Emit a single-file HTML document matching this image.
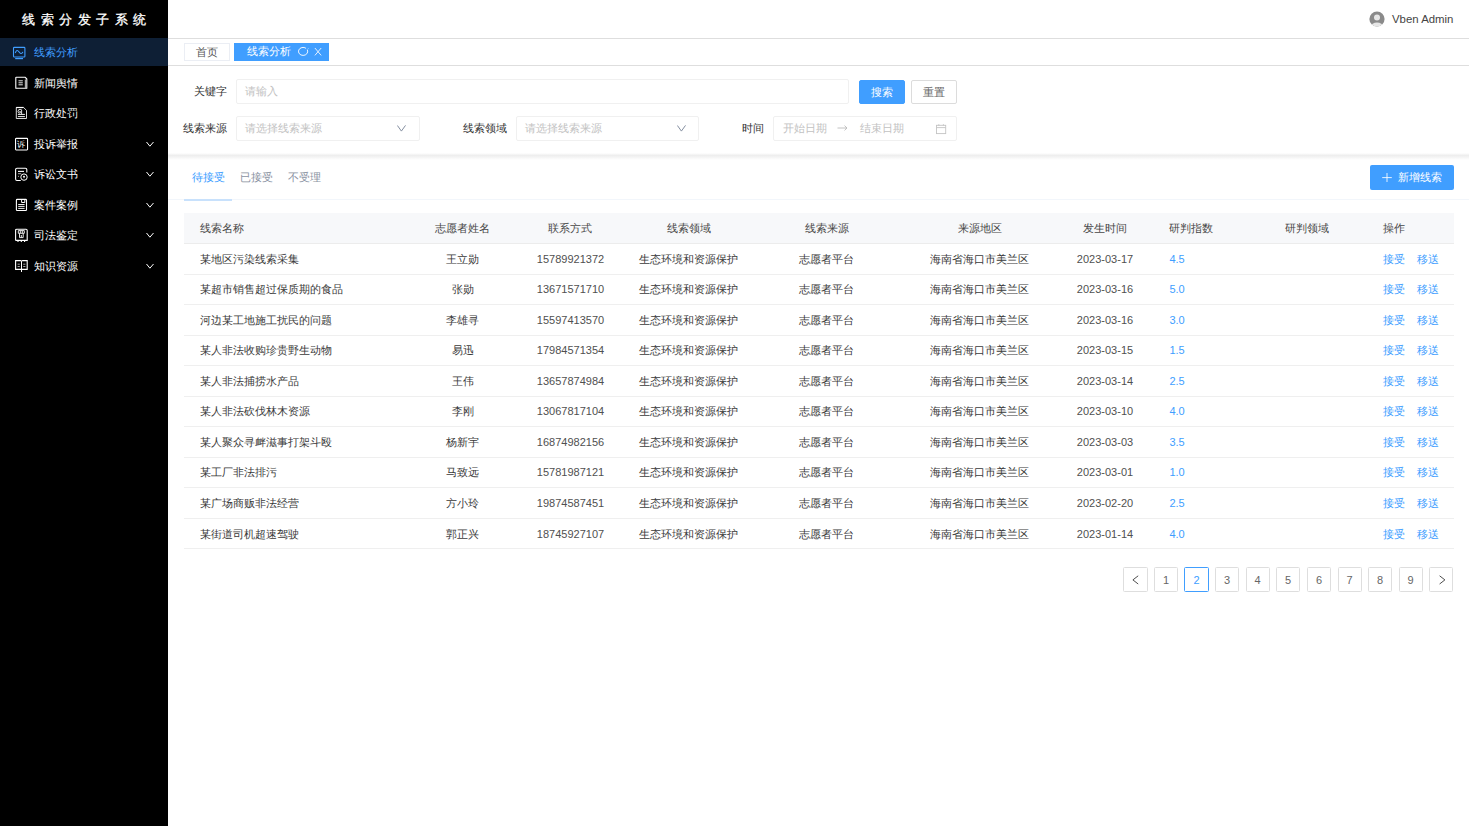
<!DOCTYPE html>
<html><head><meta charset="utf-8">
<style>
*{box-sizing:border-box;margin:0;padding:0}
html,body{width:1469px;height:826px;overflow:hidden;background:#fff;font-family:"Liberation Sans",sans-serif;font-size:11px;color:#333}
#side{position:absolute;left:0;top:0;width:168px;height:826px;background:#000}
#title{position:absolute;left:0;top:9px;width:168px;height:22px;line-height:22px;color:#fff;font-size:13.3px;letter-spacing:5.5px;padding-left:22px;-webkit-text-stroke:0.3px #fff;white-space:nowrap}
.mi{position:absolute;left:0;width:168px;height:28px;line-height:28px;color:#fff;font-size:11px}
.mi .t{position:absolute;left:34px;top:0}
.mi.act{background:#0e1f35;color:#409eff}
.mi svg{position:absolute}
.chev{position:absolute;left:145px;top:11px}
#hdr{position:absolute;left:168px;top:0;width:1301px;height:39px;border-bottom:1px solid #dedede}
#user{position:absolute;left:1392px;top:9px;line-height:20px;font-size:11.4px;color:#444}
#tabs{position:absolute;left:168px;top:39px;width:1301px;height:27px;border-bottom:1px solid #dedede}
.tab{position:absolute;top:4px;height:18px;line-height:16px;font-size:11px}
.lbl{position:absolute;line-height:24px;height:24px;text-align:right;color:#333;font-size:11px;white-space:nowrap}
.inp{position:absolute;height:25px;border:1px solid #f0f0f0;border-radius:2px;line-height:23px;padding-left:8px;color:#c2c2c2;font-size:11px;white-space:nowrap}
.btn{position:absolute;height:24px;line-height:22px;text-align:center;border-radius:2px;font-size:11px}
#shadow{position:absolute;left:168px;top:153px;width:1301px;height:7px;background:linear-gradient(#fff 0%,#eeeeee 35%,#f4f4f4 60%,#fff 100%)}
.ttab{position:absolute;top:168px;line-height:18px;font-size:11px;color:#8a92a2}
#tabline{position:absolute;left:168px;top:199px;width:1301px;height:1px;background:#f2f6fb}
#tabind{position:absolute;left:184px;top:199px;width:48px;height:2px;background:#c8e1fc}
#thead{position:absolute;left:184px;top:212.5px;width:1270px;height:31px;background:#f7f8fa;border-bottom:1px solid #ececec}
.tr{position:absolute;left:184px;width:1270px;height:30px}
.bl{position:absolute;left:184px;width:1270px;height:1px;background:#efefef}
.tr span,#thead span{position:absolute;top:0;white-space:nowrap}
.tr{color:#3a3a3a}#thead{color:#474747}
.tr>span{line-height:30px}
#thead>span{line-height:30px}
.c1{left:15.5px}
.c2{left:228.6px;width:100.8px;text-align:center}
.c3{left:329.4px;width:114.2px;text-align:center}
.c4{left:443.6px;width:122.8px;text-align:center}
.c5{left:566.4px;width:152.6px;text-align:center}
.c6{left:719px;width:153px;text-align:center}
.c7{left:872px;width:98px;text-align:center}
.c8{left:985.4px}
.c9{left:1062px;width:122px;text-align:center}
.c10{left:1199.4px}
.tr .c8{color:#409eff}
.tr .c3,.tr .c7{color:#505050}
.lk{position:static!important;color:#409eff}
.l2{margin-left:12px}
.pg{position:absolute;top:567px;width:24px;height:25px;border:1px solid #dedede;border-radius:1.5px;text-align:center;line-height:24.5px;font-size:11px;color:#666}
.pg.on{border-color:#409eff;color:#409eff}
</style></head><body>
<div id="side">
  <div id="title">线索分发子系统</div>
  <div class="mi act" style="top:38px">
    <svg style="left:12px;top:8px" width="14" height="14" viewBox="0 0 14 14" fill="none" stroke="#409eff" stroke-width="1.1"><rect x="1.5" y="1.4" width="11.4" height="9.6" rx="0.8"/><path d="M3.4 6.6 C4.3 4 5.6 3.9 6.9 5.8 C8 7.7 9.8 8.1 10.7 6.3" stroke-linecap="round"/><path d="M3.2 12.6 H11" stroke-width="1.2"/></svg>
    <span class="t">线索分析</span></div>
  <div class="mi" style="top:68.5px">
    <svg style="left:15px;top:7.5px" width="14" height="14" viewBox="0 0 14 14" fill="none" stroke="#fff" stroke-width="1.1"><path d="M1.5 1.2 H10 L11.8 3 V12.3 H0.8 V1.5 Z" stroke-linejoin="round"/><path d="M10.6 3.5 V12" stroke="#aaa" stroke-width="1.6"/><path d="M3.5 4.8 H7.8 M3.5 6.8 H7.8 M3.5 8.8 H7.8" stroke-width="0.9"/></svg>
    <span class="t">新闻舆情</span></div>
  <div class="mi" style="top:99px">
    <svg style="left:15px;top:7px" width="14" height="14" viewBox="0 0 14 14" fill="none" stroke="#fff" stroke-width="0.9"><path d="M1.3 1.5 H8.6 L11.5 4.4 V12.5 H1.3 Z" stroke-width="0.85"/><path d="M1.3 1.5 H8.4" stroke-width="1.2"/><path d="M6.4 3.4 Q3 2.8 3 5.3 Q3 7.4 5 7.1 Q6.2 6.7 5.5 5.6 Q4.8 5.1 4.2 5.8" stroke-width="0.85"/><path d="M6.6 3.6 V8" stroke-width="0.85"/><path d="M2.9 8.4 H9.9 M2.9 10.6 H9.9" stroke-width="0.95"/></svg>
    <span class="t">行政处罚</span></div>
  <div class="mi" style="top:129.5px">
    <svg style="left:14px;top:7.5px" width="15" height="15" viewBox="0 0 15 15" fill="none" stroke="#fff" stroke-width="1.1"><rect x="1.55" y="1.35" width="12" height="11.6" rx="0.6"/><text x="7.4" y="10.1" font-size="7.6" text-anchor="middle" fill="#fff" stroke="none" font-family="Liberation Sans, sans-serif">诉</text></svg>
    <span class="t">投诉举报</span></div>
  <div class="mi" style="top:160px">
    <svg style="left:14px;top:7px" width="16" height="16" viewBox="0 0 16 16" fill="none" stroke="#fff" stroke-width="1.1"><path d="M6.8 13.5 H3 Q1.6 13.5 1.6 12.1 V2.6 Q1.6 1.2 3 1.2 H11.4 Q12.8 1.2 12.8 2.6 V5.6"/><path d="M4 4.4 H10"/><path d="M4 6.7 H7.2 M4 9.3 H5" stroke="#aaa" stroke-width="1"/><circle cx="10" cy="10.1" r="3.2" stroke-width="1"/><path d="M10 8.5 L11.1 9.6 L10 11.6 L8.9 9.6 Z" fill="#fff" stroke="none"/></svg>
    <span class="t">诉讼文书</span></div>
  <div class="mi" style="top:190.5px">
    <svg style="left:15px;top:7.5px" width="14" height="14" viewBox="0 0 14 14" fill="none" stroke="#fff" stroke-width="1.1"><rect x="1.4" y="1.35" width="10.1" height="11.2" rx="0.8"/><path d="M6.6 1.6 V4.5 H9.8 V1.6" stroke-width="1"/><path d="M3.2 6.5 H9.6 M3.2 8.4 H9.6 M3.2 10.4 H9.6" stroke-width="0.95"/></svg>
    <span class="t">案件案例</span></div>
  <div class="mi" style="top:221px">
    <svg style="left:14px;top:7px" width="15" height="15" viewBox="0 0 15 15" fill="none" stroke="#fff" stroke-width="1.1"><path d="M1.6 12.4 V2.4 Q1.6 1.2 2.8 1.2 H12 Q13.2 1.2 13.2 2.4 V12.4 H1.6"/><path d="M4 12.8 V14 M7.3 12.8 V14 M10.6 12.8 V14" stroke-width="1.1"/><path d="M4.3 2.6 H10.3 V5.3 H4.3 Z M6.3 2.8 V5 M8.3 2.8 V5 M5.5 5.4 V9.6 H9.2 V5.4 M7.3 7 V9.6" stroke-width="0.9"/></svg>
    <span class="t">司法鉴定</span></div>
  <div class="mi" style="top:251.5px">
    <svg style="left:14px;top:7.5px" width="15" height="15" viewBox="0 0 15 15" fill="none" stroke="#fff" stroke-width="1.1"><path d="M1.6 10.4 V1.6 H6.4 L7.5 2.2 L8.6 1.6 H13.2 V10.4 Z"/><path d="M7.5 2.2 V13" stroke-width="1"/><path d="M3.6 5.2 H5.8 M3.6 7.5 H5.8 M9.2 5.2 H11.4 M9.2 7.5 H11.4" stroke="#bbb" stroke-width="0.9"/></svg>
    <span class="t">知识资源</span></div>
  <svg class="chev" style="top:140.5px" width="10" height="7" viewBox="0 0 10 7" fill="none" stroke="#fff" stroke-width="1"><path d="M1.5 1 L4.9 5.2 L8.5 1"/></svg>
  <svg class="chev" style="top:171px" width="10" height="7" viewBox="0 0 10 7" fill="none" stroke="#fff" stroke-width="1"><path d="M1.5 1 L4.9 5.2 L8.5 1"/></svg>
  <svg class="chev" style="top:201.5px" width="10" height="7" viewBox="0 0 10 7" fill="none" stroke="#fff" stroke-width="1"><path d="M1.5 1 L4.9 5.2 L8.5 1"/></svg>
  <svg class="chev" style="top:232px" width="10" height="7" viewBox="0 0 10 7" fill="none" stroke="#fff" stroke-width="1"><path d="M1.5 1 L4.9 5.2 L8.5 1"/></svg>
  <svg class="chev" style="top:262.5px" width="10" height="7" viewBox="0 0 10 7" fill="none" stroke="#fff" stroke-width="1"><path d="M1.5 1 L4.9 5.2 L8.5 1"/></svg>
</div>

<div id="hdr"></div>
<svg style="position:absolute;left:1369px;top:11px" width="16" height="16" viewBox="0 0 16 16"><defs><clipPath id="cc"><circle cx="8" cy="8" r="7.6"/></clipPath></defs><circle cx="8" cy="8" r="7.6" fill="#8a8a8a"/><g clip-path="url(#cc)"><circle cx="8" cy="6.6" r="3" fill="#e6e6e6"/><ellipse cx="8" cy="15.6" rx="6" ry="4.2" fill="#e6e6e6"/></g></svg>
<div id="user">Vben Admin</div>

<div id="tabs">
  <div class="tab" style="left:16px;width:46px;border:1px solid #ebeef4;text-align:center;color:#555">首页</div>
  <div class="tab" style="left:66px;width:95px;background:#409eff;color:#fff;padding-left:13px">线索分析
    <svg style="position:absolute;left:63.5px;top:3px" width="11" height="11" viewBox="0 0 11 11" fill="none" stroke="#fff" stroke-width="0.9"><path d="M9.42 4.03 A4.6 4 0 1 1 8.06 2.34"/><path d="M9.3 3.5 L10.3 2.5" stroke-width="0.8"/></svg>
    <svg style="position:absolute;left:79.5px;top:4px" width="9" height="10" viewBox="0 0 9 10" fill="none" stroke="#f4f8ff" stroke-width="0.9"><path d="M0.9 1 L7.2 8.4 M7.2 1 L0.9 8.4"/></svg>
  </div>
</div>

<div class="lbl" style="left:168px;width:59px;top:79px">关键字</div>
<div class="inp" style="left:236px;top:79px;width:613px">请输入</div>
<div class="btn" style="left:859px;top:79.5px;width:46px;background:#409eff;color:#fff;border:1px solid #409eff">搜索</div>
<div class="btn" style="left:911px;top:80px;width:46px;background:#fff;color:#666;border:1px solid #dcdcdc">重置</div>

<div class="lbl" style="left:168px;width:59px;top:116px">线索来源</div>
<div class="inp" style="left:236px;top:116px;width:184px">请选择线索来源
  <svg style="position:absolute;left:160px;top:8px" width="10" height="8" viewBox="0 0 10 8" fill="none" stroke="#7d889b" stroke-width="0.95"><path d="M0.4 0.5 L4.4 6.1 L8.5 0.4"/></svg></div>
<div class="lbl" style="left:440px;width:67px;top:116px">线索领域</div>
<div class="inp" style="left:516px;top:116px;width:183px">请选择线索来源
  <svg style="position:absolute;left:160px;top:8px" width="10" height="8" viewBox="0 0 10 8" fill="none" stroke="#7d889b" stroke-width="0.95"><path d="M0.4 0.5 L4.4 6.1 L8.5 0.4"/></svg></div>
<div class="lbl" style="left:700px;width:64px;top:116px">时间</div>
<div class="inp" style="left:773px;top:116px;width:184px;padding-left:8.5px">开始日期
  <svg style="position:absolute;left:63px;top:8px" width="11" height="6" viewBox="0 0 11 6" fill="none" stroke="#bbb" stroke-width="0.9"><path d="M0.5 3 H10 M7.5 0.6 L10 3 L7.5 5.4"/></svg>
  <span style="position:absolute;left:86px;top:0">结束日期</span>
  <svg style="position:absolute;left:162px;top:6.5px" width="11" height="11" viewBox="0 0 11 11" fill="none" stroke="#c4c4c4" stroke-width="0.9"><rect x="0.5" y="1.3" width="9.2" height="8.3"/><path d="M0.5 3.6 H9.7 M2.8 0.2 V1.8 M7.4 0.2 V1.8"/></svg>
</div>

<div id="shadow"></div>

<div class="ttab" style="left:191.5px;color:#409eff">待接受</div>
<div class="ttab" style="left:240px">已接受</div>
<div class="ttab" style="left:288px">不受理</div>
<div id="tabline"></div>
<div id="tabind"></div>
<div class="btn" style="left:1370px;top:165px;width:84px;height:25px;line-height:25px;background:#409eff;color:#fff;text-align:left;padding-left:28px">
  <svg style="position:absolute;left:12px;top:8px" width="10" height="10" viewBox="0 0 10 10" fill="none" stroke="#fff" stroke-width="0.85"><path d="M5 0 V9 M0.2 4.6 H9.8"/></svg>新增线索</div>

<div id="thead"><span class="c1">线索名称</span><span class="c2">志愿者姓名</span><span class="c3">联系方式</span><span class="c4">线索领域</span><span class="c5">线索来源</span><span class="c6">来源地区</span><span class="c7">发生时间</span><span class="c8">研判指数</span><span class="c9">研判领域</span><span class="c10">操作</span></div>
<div class="bl" style="top:274.00px"></div>
<div class="tr" style="top:243.50px"><span class="c1">某地区污染线索采集</span><span class="c2">王立勋</span><span class="c3">15789921372</span><span class="c4">生态环境和资源保护</span><span class="c5">志愿者平台</span><span class="c6">海南省海口市美兰区</span><span class="c7">2023-03-17</span><span class="c8">4.5</span><span class="c10"><span class="lk">接受</span><span class="lk l2">移送</span></span></div>
<div class="bl" style="top:304.00px"></div>
<div class="tr" style="top:274.06px"><span class="c1">某超市销售超过保质期的食品</span><span class="c2">张勋</span><span class="c3">13671571710</span><span class="c4">生态环境和资源保护</span><span class="c5">志愿者平台</span><span class="c6">海南省海口市美兰区</span><span class="c7">2023-03-16</span><span class="c8">5.0</span><span class="c10"><span class="lk">接受</span><span class="lk l2">移送</span></span></div>
<div class="bl" style="top:335.00px"></div>
<div class="tr" style="top:304.62px"><span class="c1">河边某工地施工扰民的问题</span><span class="c2">李雄寻</span><span class="c3">15597413570</span><span class="c4">生态环境和资源保护</span><span class="c5">志愿者平台</span><span class="c6">海南省海口市美兰区</span><span class="c7">2023-03-16</span><span class="c8">3.0</span><span class="c10"><span class="lk">接受</span><span class="lk l2">移送</span></span></div>
<div class="bl" style="top:365.00px"></div>
<div class="tr" style="top:335.18px"><span class="c1">某人非法收购珍贵野生动物</span><span class="c2">易迅</span><span class="c3">17984571354</span><span class="c4">生态环境和资源保护</span><span class="c5">志愿者平台</span><span class="c6">海南省海口市美兰区</span><span class="c7">2023-03-15</span><span class="c8">1.5</span><span class="c10"><span class="lk">接受</span><span class="lk l2">移送</span></span></div>
<div class="bl" style="top:396.00px"></div>
<div class="tr" style="top:365.74px"><span class="c1">某人非法捕捞水产品</span><span class="c2">王伟</span><span class="c3">13657874984</span><span class="c4">生态环境和资源保护</span><span class="c5">志愿者平台</span><span class="c6">海南省海口市美兰区</span><span class="c7">2023-03-14</span><span class="c8">2.5</span><span class="c10"><span class="lk">接受</span><span class="lk l2">移送</span></span></div>
<div class="bl" style="top:426.00px"></div>
<div class="tr" style="top:396.30px"><span class="c1">某人非法砍伐林木资源</span><span class="c2">李刚</span><span class="c3">13067817104</span><span class="c4">生态环境和资源保护</span><span class="c5">志愿者平台</span><span class="c6">海南省海口市美兰区</span><span class="c7">2023-03-10</span><span class="c8">4.0</span><span class="c10"><span class="lk">接受</span><span class="lk l2">移送</span></span></div>
<div class="bl" style="top:457.00px"></div>
<div class="tr" style="top:426.86px"><span class="c1">某人聚众寻衅滋事打架斗殴</span><span class="c2">杨新宇</span><span class="c3">16874982156</span><span class="c4">生态环境和资源保护</span><span class="c5">志愿者平台</span><span class="c6">海南省海口市美兰区</span><span class="c7">2023-03-03</span><span class="c8">3.5</span><span class="c10"><span class="lk">接受</span><span class="lk l2">移送</span></span></div>
<div class="bl" style="top:487.00px"></div>
<div class="tr" style="top:457.42px"><span class="c1">某工厂非法排污</span><span class="c2">马致远</span><span class="c3">15781987121</span><span class="c4">生态环境和资源保护</span><span class="c5">志愿者平台</span><span class="c6">海南省海口市美兰区</span><span class="c7">2023-03-01</span><span class="c8">1.0</span><span class="c10"><span class="lk">接受</span><span class="lk l2">移送</span></span></div>
<div class="bl" style="top:518.00px"></div>
<div class="tr" style="top:487.98px"><span class="c1">某广场商贩非法经营</span><span class="c2">方小玲</span><span class="c3">19874587451</span><span class="c4">生态环境和资源保护</span><span class="c5">志愿者平台</span><span class="c6">海南省海口市美兰区</span><span class="c7">2023-02-20</span><span class="c8">2.5</span><span class="c10"><span class="lk">接受</span><span class="lk l2">移送</span></span></div>
<div class="bl" style="top:548.00px"></div>
<div class="tr" style="top:518.54px"><span class="c1">某街道司机超速驾驶</span><span class="c2">郭正兴</span><span class="c3">18745927107</span><span class="c4">生态环境和资源保护</span><span class="c5">志愿者平台</span><span class="c6">海南省海口市美兰区</span><span class="c7">2023-01-14</span><span class="c8">4.0</span><span class="c10"><span class="lk">接受</span><span class="lk l2">移送</span></span></div>

<div class="pg" style="left:1123px;width:24.5px"><svg style="position:absolute;left:7px;top:7px" width="10" height="10" viewBox="0 0 10 10" fill="none" stroke="#444" stroke-width="0.95"><path d="M7.2 0.8 L1.9 4.9 L7.2 9"/></svg></div>
<div class="pg" style="left:1154px">1</div>
<div class="pg on" style="left:1184.3px;width:24.4px">2</div>
<div class="pg" style="left:1215px">3</div>
<div class="pg" style="left:1245.5px">4</div>
<div class="pg" style="left:1276px">5</div>
<div class="pg" style="left:1307px">6</div>
<div class="pg" style="left:1337.5px">7</div>
<div class="pg" style="left:1368px">8</div>
<div class="pg" style="left:1398.5px">9</div>
<div class="pg" style="left:1429px"><svg style="position:absolute;left:7px;top:7px" width="10" height="10" viewBox="0 0 10 10" fill="none" stroke="#444" stroke-width="0.95"><path d="M2.6 0.8 L7.9 4.9 L2.6 9"/></svg></div>
</body></html>
